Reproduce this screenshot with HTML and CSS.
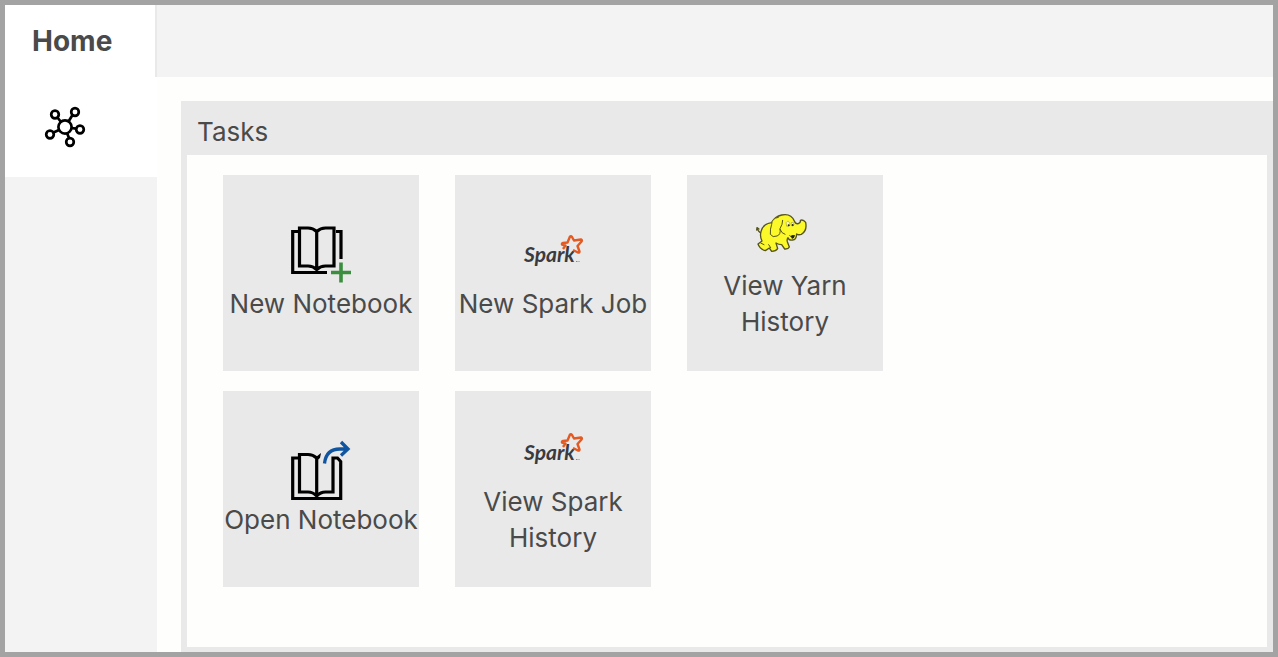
FILE: index.html
```html
<!DOCTYPE html>
<html lang="en">
<head>
<meta charset="utf-8">
<title>Home</title>
<link rel="stylesheet" href="styles.css">
</head>
<body>
<div class="app">
  <header class="topbar">
    <h1 class="tab">Home</h1>
  </header>
  <div class="content">
    <nav class="sidebar">
      <button class="nav-item" type="button" aria-label="Cluster">
        <svg class="nav-icon" viewBox="0 0 40 40" fill="none" stroke="#000" stroke-width="2.700">
          <circle cx="20" cy="20" r="6.600"/>
          <circle cx="10" cy="7.500" r="3.800"/>
          <circle cx="30" cy="5" r="3.800"/>
          <circle cx="35" cy="22.500" r="3.800"/>
          <circle cx="25" cy="35" r="3.800"/>
          <circle cx="5" cy="27.500" r="3.800"/>
          <path d="M12.500 10.500L16 15M27.500 8L23.500 14.500M31 21.700L26.500 21M24 31L22 26M8.500 25.500L14 23"/>
        </svg>
      </button>
    </nav>
    <main class="main">
      <section class="panel">
        <h2 class="panel-title">Tasks</h2>
        <div class="tiles">
          <button class="tile" type="button">
            <svg class="icon" viewBox="0 0 62 62" fill="none" stroke="#000" stroke-width="3.200">
              <path d="M8 7.500H2.700V48.500H37M46 7.500H51V35"/>
              <path d="M9.500 4H18Q23 4 26.700 7.500Q30.500 4 35.500 4H44V42H35.500Q30.500 42 26.700 45.500Q23 42 18 42H9.500ZM26.700 7V45"/>
              <path d="M41 48.500H61M51 38.500V58.500" stroke="#3a8f3f" stroke-width="3.600"/>
            </svg>
            <span>New Notebook</span>
          </button>
          <button class="tile" type="button">
            <svg class="icon" viewBox="0 0 62 62" fill="none" stroke="#000" stroke-width="3.200">
              <path d="M8 18H2.700V58.500H50.700V21.500L47.500 18H43V52H35.500Q30.500 52 26.700 56Q23 52 18 52H9.500V14.500H18Q23 14.500 26.700 18V55"/>
              <path d="M26 17L31 13L30 18L27.500 20Z" fill="#000" stroke="none"/>
              <path d="M34.500 23.500Q36 9 50 9H57M51 2L58 9L51 15.500" stroke="#10559f" stroke-width="3.300"/>
            </svg>
            <span>Open Notebook</span>
          </button>
          <button class="tile" type="button">
            <svg class="icon" viewBox="0 0 62 62">
              <text x="2" y="38" class="spark-word">Spark</text>
              <path d="M41 25L43.500 21.500L40 20.500Q39.500 19.500 41 19L45.500 18.500L48 12.500Q49 11.500 50 13L52 16.500L59 15.500Q60.500 16 59.500 17.500L55.500 22L57.500 27.500Q57.500 29 56 28.500L51 26" fill="none" stroke="#e35a22" stroke-width="2.400" stroke-linejoin="round"/>
              <path d="M54 37.500h1.500M56.500 37.500h1" stroke="#888"/>
            </svg>
            <span>New Spark Job</span>
          </button>
          <button class="tile" type="button">
            <svg class="icon" viewBox="0 0 62 62">
              <text x="2" y="38" class="spark-word">Spark</text>
              <path d="M41 25L43.500 21.500L40 20.500Q39.500 19.500 41 19L45.500 18.500L48 12.500Q49 11.500 50 13L52 16.500L59 15.500Q60.500 16 59.500 17.500L55.500 22L57.500 27.500Q57.500 29 56 28.500L51 26" fill="none" stroke="#e35a22" stroke-width="2.400" stroke-linejoin="round"/>
              <path d="M54 37.500h1.500M56.500 37.500h1" stroke="#888"/>
            </svg>
            <span>View Spark History</span>
          </button>
          <button class="tile" type="button">
            <svg class="icon" viewBox="27 3 186 186" fill="#fbf92a" stroke="#55541c" stroke-width="4" stroke-linejoin="round" stroke-linecap="round">
              <path d="M49 84Q40 82 36 68M36 68L35 75M36 68L42 72" fill="none"/>
              <path d="M48 80Q54 56 80 53Q90 34 110 30Q138 24 148 48Q152 58 160 56Q168 52 166 46Q174 42 182 52Q187 78 169 88Q160 91 155 87Q154 105 143 105Q132 107 129 98Q125 103 127 110L133 126Q130 133 119 132L110 119Q101 119 93 114L98 131Q93 139 80 139L73 129L61 137Q44 132 39 117L51 108Q44 95 48 80Z"/>
              <path d="M100 37Q80 40 80 58Q75 72 76 88Q83 99 96 93Q108 89 105 71Q113 58 113 46" stroke-width="3"/>
              <path d="M105 73Q110 86 120 88M134 92Q143 101 149 91M71 119L77 128M47 114L57 119" fill="none" stroke-width="3"/>
              <path d="M124 52Q130 43 134 55Q136 66 126 64Z" fill="#fbf9b0" stroke-width="1"/>
              <path d="M140 52Q146 48 147 59Q145 67 139 62Z" fill="#fbf9b0" stroke-width="1"/>
              <circle cx="131" cy="61" r="3" fill="#222" stroke="none"/>
              <circle cx="143" cy="60" r="3" fill="#222" stroke="none"/>
              <path d="M137 93Q146 86 149 94Q147 102 141 101Z" fill="#222" stroke="none"/>
            </svg>
            <span>View Yarn History</span>
          </button>
        </div>
      </section>
    </main>
  </div>
</div>
</body>
</html>
```
FILE: styles.css
```css
* { box-sizing: border-box; }
body {
  margin: 0;
  font-family: Inter, "Liberation Sans", sans-serif;
  color: #4a4a4a;
}
.app {
  display: flex;
  flex-direction: column;
  min-height: 100vh;
  border: 5px solid #a3a3a3;
  background: #fefefd;
}
.topbar {
  display: flex;
  height: 72px;
  background: #f3f3f3;
}
.tab {
  width: 152px;
  margin: 0;
  padding-left: 27px;
  border-right: 2px solid #e9e9e9;
  background: #fff;
  font-size: 28px;
  font-weight: 700;
  line-height: 72px;
}
.content {
  display: flex;
  flex: 1;
}
.sidebar {
  width: 152px;
  background: #f3f3f3;
}
.nav-item {
  display: block;
  width: 100%;
  height: 100px;
  padding: 0 0 0 40px;
  border: 0;
  background: #fff;
  text-align: left;
}
.nav-icon {
  display: block;
  width: 40px;
  height: 40px;
  overflow: visible;
}
.main {
  display: flex;
  flex: 1;
  padding: 24px 0 0 24px;
}
.panel {
  display: flex;
  flex: 1;
  flex-direction: column;
  padding: 0 6px 5px;
  background: #e9e9e9;
}
.panel-title {
  margin: 0;
  padding: 8px 10px 0;
  font-size: 26px;
  font-weight: 400;
  line-height: 46px;
}
.tiles {
  display: grid;
  flex: 1;
  grid-template-rows: 196px 196px;
  grid-auto-columns: 196px;
  grid-auto-flow: column;
  gap: 20px 36px;
  padding: 20px 36px;
  background: #fefefd;
}
.tile {
  display: flex;
  flex-direction: column;
  align-items: center;
  justify-content: center;
  padding: 0;
  border: 0;
  background: #e9e9e9;
  color: inherit;
  font: 26px/36px Inter, "Liberation Sans", sans-serif;
  text-align: center;
}
.icon {
  width: 62px;
  height: 62px;
}
.spark-word {
  fill: #3c3a3e;
  font: italic 700 21px Lato, sans-serif;
}
```
